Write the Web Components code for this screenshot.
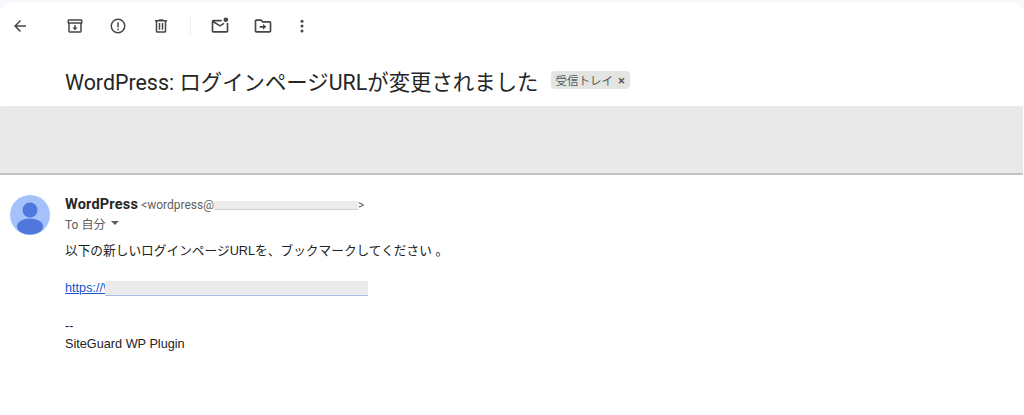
<!DOCTYPE html>
<html lang="ja">
<head>
<meta charset="utf-8">
<title>WordPress: ログインページURLが変更されました</title>
<style>
    html, body { margin: 0; padding: 0; background: #f6f8fc; }
    body { width: 1024px; height: 415px; overflow: hidden; font-family: Roboto, "Noto Sans CJK JP", sans-serif; }
</style>
</head>
<body>

<template id="tool-icon">
    <style>
        :host { display: flex; width: 20px; height: 20px; flex: none; align-items: center; justify-content: center; }
        ::slotted(svg) { display: block; width: 18px; height: 18px; fill: #444746; }
    </style>
    <slot></slot>
</template>

<template id="mail-toolbar">
    <style>
        :host { display: flex; align-items: center; height: 48px; padding: 0 0 0 10px; }
        .back { margin-right: 35px; }
        .group { display: flex; align-items: center; gap: 23px; }
        .sep { width: 1px; height: 20px; background: #eeeeee; margin: 0 19px; }
        .last { margin-left: -4px; }
    </style>
    <tool-icon class="back"><svg viewBox="0 0 24 24"><path d="M20 11H7.830l5.590-5.590L12 4l-8 8 8 8 1.410-1.410L7.830 13H20z"/></svg></tool-icon>
    <div class="group">
        <tool-icon><svg viewBox="0 0 24 24"><path d="M20 3H4c-1.100 0-2 .9-2 2v2.500c0 .7.4 1.300 1 1.700V19c0 1.100 1.100 2 2 2h14c.9 0 2-.9 2-2V9.200c.6-.4 1-1 1-1.700V5c0-1.100-.9-2-2-2zm-1 16H5V9h14v10zm1-12H4V5h16v2z"/><path d="M11 10.500h2V14h2.500L12 17.500 8.500 14H11z"/></svg></tool-icon>
        <tool-icon><svg viewBox="0 0 24 24"><path d="M12 2a10 10 0 1 0 0 20 10 10 0 0 0 0-20zm0 18a8 8 0 1 1 0-16 8 8 0 0 1 0 16z"/><path d="M11 7h2v7h-2zM11 15.500h2v2h-2z"/></svg></tool-icon>
        <tool-icon><svg viewBox="0 0 24 24"><path d="M15 4V3H9v1H4v2h1v13c0 1.100.9 2 2 2h10c1.100 0 2-.9 2-2V6h1V4h-5zm2 15H7V6h10v13z"/><path d="M9 8h2v9H9zM13 8h2v9h-2z"/></svg></tool-icon>
    </div>
    <div class="sep"></div>
    <div class="group">
        <tool-icon><svg viewBox="0 0 24 24" style="width:20px;height:20px"><path d="M20 8.500V18H4V8l8 5 5.300-3.300-1.100-1.700L12 10.700 5.500 6.500H14v-2H4c-1.100 0-2 .9-2 2V18c0 1.100.9 2 2 2h16c1.100 0 2-.9 2-2V8.500z"/><circle cx="19" cy="4.500" r="2.800"/></svg></tool-icon>
        <tool-icon><svg viewBox="0 0 24 24" style="width:20px;height:20px"><path d="M20 6h-8l-2-2H4c-1.100 0-2 .9-2 2v12c0 1.100.9 2 2 2h16c1.100 0 2-.9 2-2V8c0-1.100-.9-2-2-2zm0 12H4V6h5.200l2 2H20v10z"/><path d="M12 9.500l4 3.500-4 3.500V14H8v-2h4z"/></svg></tool-icon>
        <tool-icon class="last"><svg viewBox="0 0 24 24"><circle cx="12" cy="5.500" r="2"/><circle cx="12" cy="12" r="2"/><circle cx="12" cy="18.500" r="2"/></svg></tool-icon>
    </div>
</template>

<template id="mail-label">
    <style>
        :host { display: inline-flex; align-items: center; height: 18px; margin-left: 13px; padding: 0 5px 0 4px; background: #e3e5e3; border-radius: 4px; font-size: 11.500px; color: #555755; }
        .x { margin-left: 5px; font-size: 13px; font-weight: 500; }
    </style>
    <slot></slot><span class="x">×</span>
</template>

<template id="mail-subject">
    <style>
        :host { display: flex; align-items: center; height: 52px; padding: 4px 0 0 65px; }
        .title { font-size: 21.400px; font-weight: 400; color: #262626; margin: 0; white-space: nowrap; }
    </style>
    <h1 class="title"><slot></slot></h1>
    <slot name="label"></slot>
</template>

<template id="redacted-band">
    <style>
        :host { display: block; height: 67px; margin-right: 1px; background: #e9e9e9; border-bottom: 2px solid #c4c4c4; border-radius: 2px 2px 0 0; }
    </style>
</template>

<template id="sender-avatar">
    <style>
        :host { display: block; width: 40px; height: 40px; flex: none; }
        svg { display: block; width: 40px; height: 40px; }
    </style>
    <svg viewBox="0 0 40 40">
        <defs><clipPath id="c"><circle cx="20" cy="20" r="20"/></clipPath></defs>
        <circle cx="20" cy="20" r="20" fill="#a4c2f9"/>
        <g clip-path="url(#c)" fill="#4f77dc">
            <circle cx="20" cy="15" r="7.500"/>
            <ellipse cx="20" cy="31.500" rx="13" ry="8"/>
        </g>
    </svg>
</template>

<template id="mail-message">
    <style>
        :host { display: flex; gap: 15px; padding: 20px 0 0 10px; }
        .main { display: flex; flex-direction: column; }
        .from { display: flex; align-items: baseline; height: 20px; margin-top: 1px; white-space: nowrap; }
        .name { font-size: 14.500px; font-weight: 700; color: #262626; letter-spacing: .2px; }
        .addr { font-size: 12px; color: #5e5e5e; margin-left: 3px; display: flex; align-items: baseline; }
        .blur { display: inline-block; width: 144px; height: 9px; background: #ececec; border-bottom: 1px solid #d0d0d0; align-self: center; box-sizing: border-box; }
        .to { display: flex; align-items: center; height: 18px; margin-top: -2px; font-size: 12px; color: #5e5e5e; }
        .caret { width: 0; height: 0; margin-left: 6px; border: 4.500px solid transparent; border-top: 4.500px solid #5e5e5e; border-bottom: 0; }
        .body { margin-top: 10px; font-size: 12.700px; line-height: 18px; color: #222222; font-family: "Liberation Sans", "Noto Sans CJK JP", sans-serif; }
        .line { height: 18px; white-space: nowrap; }
        .gap-a { margin-top: 19px; }
        .gap-b { margin-top: 20px; }
        .link { display: flex; align-items: center; }
        a { color: #1155cc; text-decoration: underline; }
        .mask { display: block; width: 263px; height: 15px; margin-left: -2px; background: #ebebeb; border-bottom: 1px solid #a9bde6; box-sizing: border-box; }
    </style>
    <sender-avatar></sender-avatar>
    <div class="main">
        <div class="from">
            <span class="name">WordPress</span>
            <span class="addr">&lt;wordpress@<span class="blur"></span>&gt;</span>
        </div>
        <div class="to">To 自分<span class="caret"></span></div>
        <div class="body">
            <div class="line">以下の新しいログインページURLを、ブックマークしてください 。</div>
            <div class="line link gap-a"><a href="#">https://\</a><span class="mask"></span></div>
            <div class="line gap-b">--</div>
            <div class="line">SiteGuard WP Plugin</div>
        </div>
    </div>
</template>

<template id="mail-view">
    <style>
        :host { display: block; height: 413px; margin-top: 2px; background: #ffffff; border-radius: 12px 12px 0 0; overflow: hidden; }
    </style>
    <mail-toolbar></mail-toolbar>
    <mail-subject>WordPress: ログインページURLが変更されました<mail-label slot="label">受信トレイ</mail-label></mail-subject>
    <redacted-band></redacted-band>
    <mail-message></mail-message>
</template>

<mail-view></mail-view>

<script>
    function define(name) {
        const template = document.getElementById(name);
        customElements.define(name, class extends HTMLElement {
            constructor() {
                super();
                this.attachShadow({ mode: 'open' }).appendChild(template.content.cloneNode(true));
            }
        });
    }
    ['tool-icon', 'mail-toolbar', 'mail-label', 'mail-subject', 'redacted-band', 'sender-avatar', 'mail-message', 'mail-view'].forEach(define);
</script>
</body>
</html>
